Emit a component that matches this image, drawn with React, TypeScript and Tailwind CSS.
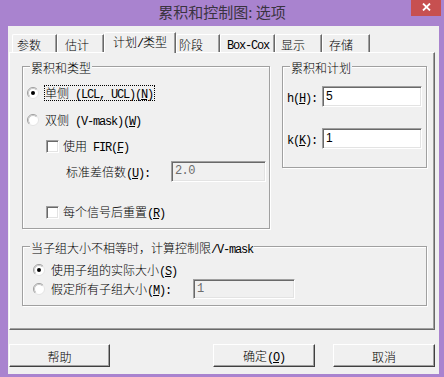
import type { ReactNode } from "react"

const CJK_RE = /[\u2e80-\u9fff\u3000-\u303f\uff00-\uffef]/

// "&X" marks the mnemonic letter, drawn underlined like a Windows label
function Mnemonic(props: { s: string }) {
  const parts = props.s.split("&")
  return (
    <>
      {parts.map((p, i) =>
        i === 0 ? (
          <span key={i}>{p}</span>
        ) : (
          <span key={i}>
            <span className="underline underline-offset-[1px]">{p.slice(0, 1)}</span>
            {p.slice(1)}
          </span>
        ),
      )}
    </>
  )
}

// SimSun look: CJK at 12px, latin half width (6px a char)
function Txt(props: { s: string }) {
  const runs: { cjk: boolean; t: string }[] = []
  for (const ch of props.s) {
    const cjk = CJK_RE.test(ch)
    const last = runs[runs.length - 1]
    if (last && last.cjk === cjk) last.t += ch
    else runs.push({ cjk, t: ch })
  }
  return (
    <span className="whitespace-pre">
      {runs.map((r, i) =>
        r.cjk ? (
          <span className="font-['Noto_Sans_CJK_SC',sans-serif] text-[12px] font-light" key={i}>
            {r.t}
          </span>
        ) : (
          <span
            className="font-['Liberation_Mono','Noto_Sans_CJK_SC',monospace] text-[12px] tracking-[-1.2px]"
            key={i}
          >
            <Mnemonic s={r.t} />
          </span>
        ),
      )}
    </span>
  )
}

function Radio(props: { checked?: boolean }) {
  return (
    <svg className="shrink-0" height="12" viewBox="0 0 12 12" width="12">
      <title>radio</title>
      <circle cx="6" cy="6" fill="#fff" r="5.5" stroke="#e3e3e3" />
      <path d="M2.1 9.9 A5.5 5.5 0 0 1 9.9 2.1" fill="none" stroke="#a0a0a0" />
      <path d="M2.8 9.2 A4.5 4.5 0 0 1 9.2 2.8" fill="none" stroke="#c8c8c8" />
      {props.checked ? <circle cx="6" cy="6" fill="#000" r="2" /> : null}
    </svg>
  )
}

function Checkbox() {
  return (
    <div className="h-[13px] w-[13px] shrink-0 border border-[#a0a0a0] border-r-white border-b-white bg-white shadow-[inset_1px_1px_0_#696969,inset_-1px_-1px_0_#e3e3e3]" />
  )
}

function Field(props: { value: string; disabled?: boolean; className: string }) {
  return (
    <div
      className={`flex shrink-0 items-start border border-[#a0a0a0] border-r-white border-b-white pl-[3px] pt-[2px] leading-[14px] shadow-[inset_1px_1px_0_#696969,inset_-1px_-1px_0_#e3e3e3] ${props.className} ${props.disabled ? "bg-[#f0f0f0] text-[#6d6d6d]" : "bg-white text-black"}`}
    >
      {props.disabled ? (
        <span className="font-['Liberation_Mono',monospace] text-[12px] tracking-[-0.6px]">{props.value}</span>
      ) : (
        <span className="font-['Liberation_Sans',sans-serif] text-[12px]">{props.value}</span>
      )}
    </div>
  )
}

function Group(props: { label: string; className: string; children: ReactNode }) {
  return (
    <div
      className={`relative shrink-0 border border-[#a0a0a0] shadow-[1px_1px_0_#fff,inset_1px_1px_0_#fff] ${props.className}`}
    >
      <div className="absolute -top-[9px] left-[7px] bg-[#f0f0f0] px-[1px] leading-[16px]">
        <Txt s={props.label} />
      </div>
      {props.children}
    </div>
  )
}

function Tab(props: { label: string; w: string; pl: string; active?: boolean }) {
  if (props.active) {
    return (
      <div
        className={`relative z-10 -mb-[1px] flex h-[21px] shrink-0 items-center rounded-tl-[2px] border-t border-l border-white border-r border-r-[#696969] bg-[#f0f0f0] pb-[3px] leading-[16px] shadow-[inset_-1px_0_0_#a0a0a0] ${props.w} ${props.pl}`}
      >
        <Txt s={props.label} />
      </div>
    )
  }
  return (
    <div
      className={`flex h-[18px] shrink-0 items-center rounded-tl-[2px] border-t border-l border-white border-r border-r-[#696969] bg-[#f0f0f0] leading-[16px] shadow-[inset_-1px_0_0_#a0a0a0] ${props.w} ${props.pl}`}
    >
      <Txt s={props.label} />
    </div>
  )
}

function Button(props: { label: string; w: string }) {
  return (
    <div
      className={`flex h-[23px] shrink-0 items-center justify-center border border-white border-r-[#404040] border-b-[#404040] bg-[#f0f0f0] leading-[16px] shadow-[inset_-1px_-1px_0_#a0a0a0] ${props.w}`}
    >
      <Txt s={props.label} />
    </div>
  )
}

export default function App() {
  return (
    <div className="flex h-[377px] w-[444px] flex-col overflow-hidden bg-[#a983cf] font-['Noto_Sans_CJK_SC',sans-serif] text-black">
      {/* title bar */}
      <div className="grid h-[26px] shrink-0 grid-cols-[1fr_auto_1fr]">
        <div />
        <div className="text-[15px] leading-[24px] text-[#3a3340]">累积和控制图: 选项</div>
        <div className="flex items-start justify-end pr-[3px]">
          <div className="flex h-[16px] w-[30px] justify-center bg-[#c75050] pt-[3px]">
            <svg height="8" viewBox="0 0 9 8" width="9">
              <title>close</title>
              <path d="M1 0.5 L8 7.5 M8 0.5 L1 7.5" stroke="#fff" strokeWidth="1.8" />
            </svg>
          </div>
        </div>
      </div>

      {/* client area */}
      <div className="mr-[5px] mb-[3px] ml-[8px] flex flex-1 flex-col bg-[#f0f0f0]">
        <div className="flex h-[26px] shrink-0 items-end pl-[4px]">
          <Tab label="参数" pl="pl-[4px]" w="w-[45px]" />
          <Tab label="估计" pl="pl-[7px]" w="w-[47px]" />
          <Tab active label="计划/类型" pl="pl-[8px]" w="w-[72px]" />
          <Tab label="阶段" pl="pl-[2px]" w="w-[44px]" />
          <Tab label="Box-Cox" pl="pl-[6px]" w="w-[55px]" />
          <Tab label="显示" pl="pl-[5px]" w="w-[47px]" />
          <Tab label="存储" pl="pl-[6px]" w="w-[48px]" />
        </div>

        <div className="ml-[1px] flex h-[278px] w-[426px] shrink-0 flex-col border border-white border-r-[#696969] border-b-[#696969] pt-[13px] pl-[12px] shadow-[inset_-1px_-1px_0_#a0a0a0]">
          <div className="flex items-start gap-[12px]">
            <Group className="h-[163px] w-[248px]" label="累积和类型">
              <div className="flex flex-col pt-[18px] leading-[16px]">
                <div className="flex h-[16px] items-center pl-[4px]">
                  <Radio checked />
                  <div className="ml-[5px] flex h-[16px] items-center border border-dotted border-black pr-[1px]">
                    <Txt s="单侧 (LCL, UCL)(&N)" />
                  </div>
                </div>
                <div className="mt-[11px] flex h-[16px] items-center pl-[4px]">
                  <Radio />
                  <div className="ml-[6px]">
                    <Txt s="双侧 (V-mask)(&W)" />
                  </div>
                </div>
                <div className="mt-[10px] flex h-[16px] items-center pl-[23px]">
                  <Checkbox />
                  <div className="ml-[4px]">
                    <Txt s="使用 FIR(&F)" />
                  </div>
                </div>
                <div className="mt-[7px] flex h-[21px] items-center pl-[43px]">
                  <div className="w-[105px]">
                    <Txt s="标准差倍数(&U):" />
                  </div>
                  <Field className="h-[21px] w-[95px]" disabled value="2.0" />
                </div>
                <div className="mt-[22px] flex h-[16px] items-center pl-[23px]">
                  <Checkbox />
                  <div className="ml-[4px]">
                    <Txt s="每个信号后重置(&R)" />
                  </div>
                </div>
              </div>
            </Group>

            <Group className="h-[102px] w-[145px]" label="累积和计划">
              <div className="flex flex-col pt-[19px] leading-[16px]">
                <div className="flex h-[21px] items-center pl-[4px]">
                  <div className="w-[35px]">
                    <Txt s="h(&H):" />
                  </div>
                  <Field className="h-[21px] w-[100px]" value="5" />
                </div>
                <div className="mt-[21px] flex h-[21px] items-center pl-[4px]">
                  <div className="w-[35px]">
                    <Txt s="k(&K):" />
                  </div>
                  <Field className="h-[21px] w-[100px]" value="1" />
                </div>
              </div>
            </Group>
          </div>

          <Group className="mt-[17px] h-[60px] w-[405px]" label="当子组大小不相等时，计算控制限/V-mask">
            <div className="flex flex-col pt-[15px] leading-[16px]">
              <div className="flex h-[16px] items-center pl-[10px]">
                <Radio checked />
                <div className="ml-[6px]">
                  <Txt s="使用子组的实际大小(&S)" />
                </div>
              </div>
              <div className="mt-[1px] flex h-[20px] items-center pl-[10px]">
                <Radio />
                <div className="ml-[6px] w-[142px]">
                  <Txt s="假定所有子组大小(&M):" />
                </div>
                <Field className="h-[20px] w-[102px]" disabled value="1" />
              </div>
            </div>
          </Group>
        </div>

        <div className="mt-[14px] ml-[1px] flex shrink-0">
          <Button label="帮助" w="w-[101px]" />
          <div className="w-[103px]" />
          <Button label="确定(&O)" w="w-[102px]" />
          <div className="w-[18px]" />
          <Button label="取消" w="w-[102px]" />
        </div>
      </div>
    </div>
  )
}
